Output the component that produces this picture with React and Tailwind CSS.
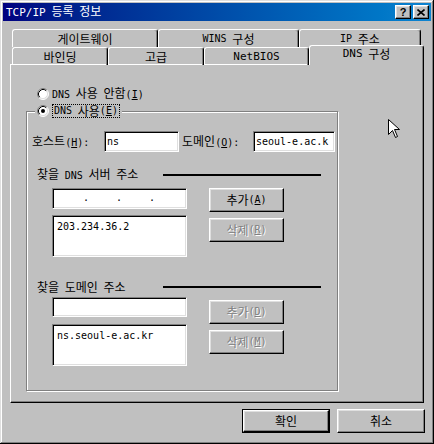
import React from "react";

function L({ children, className = "" }) {
  return (
    <span className={"font-['DejaVu_Sans_Mono',monospace] text-[10px] [word-spacing:0px] " + className}>
      {children}
    </span>
  );
}

function M({ c }) {
  return (
    <L>
      (<u className="underline underline-offset-[1px]">{c}</u>)
    </L>
  );
}

function Radio({ checked }) {
  return (
    <svg width="12" height="12" viewBox="0 0 12 12" className="shrink-0">
      <circle cx="6" cy="6" r="5" fill="#fff" />
      <path d="M2.11 9.89 A5.5 5.5 0 0 1 9.89 2.11" stroke="#808080" fill="none" strokeWidth="1" />
      <path d="M9.89 2.11 A5.5 5.5 0 0 1 2.11 9.89" stroke="#fff" fill="none" strokeWidth="1" />
      <path d="M2.82 9.18 A4.5 4.5 0 0 1 9.18 2.82" stroke="#000" fill="none" strokeWidth="1" />
      <path d="M9.18 2.82 A4.5 4.5 0 0 1 2.82 9.18" stroke="#dfdfdf" fill="none" strokeWidth="1" />
      {checked && <circle cx="6" cy="6" r="2" fill="#000" />}
    </svg>
  );
}

function Tab({ className = "", children }) {
  return (
    <div
      className={
        "h-[18px] flex items-center justify-center border-t border-l border-r border-t-white border-l-white border-r-black rounded-tl-[3px] rounded-tr-[3px] shadow-[inset_-1px_0_#808080] whitespace-pre " +
        className
      }
    >
      {children}
    </div>
  );
}

function Btn({ className = "", children, disabled, def }) {
  const inner = (
    <div
      className={
        "h-full w-full flex items-center justify-center border border-t-white border-l-white border-r-black border-b-black shadow-[inset_-1px_-1px_#808080,inset_1px_1px_#dfdfdf] whitespace-nowrap " +
        (disabled ? "text-[#808080] [text-shadow:1px_1px_0_#fff]" : "text-black")
      }
    >
      {children}
    </div>
  );
  if (def) {
    return <div className={"border border-black " + className}>{inner}</div>;
  }
  return <div className={className}>{inner}</div>;
}

function Field({ className = "", children }) {
  return (
    <div
      className={
        "bg-white border border-t-[#808080] border-l-[#808080] border-b-white border-r-white shadow-[inset_1px_1px_#000,inset_-1px_-1px_#dfdfdf] " +
        className
      }
    >
      {children}
    </div>
  );
}

function CapBtn({ children }) {
  return (
    <div className="w-[16px] h-[14px] bg-[#c0c0c0] flex items-center justify-center border border-t-white border-l-white border-r-black border-b-black shadow-[inset_-1px_-1px_#808080,inset_1px_1px_#dfdfdf]">
      {children}
    </div>
  );
}

export default function App() {
  return (
    <div className="relative w-[434px] h-[444px] bg-[#c0c0c0] p-[3px] flex flex-col font-['Noto_Sans_CJK_KR',sans-serif] text-[12px] leading-[14px] [word-spacing:3px] text-black shadow-[inset_-1px_-1px_#000,inset_1px_1px_#dfdfdf,inset_-2px_-2px_#808080,inset_2px_2px_#fff] overflow-hidden select-none">
      {/* Title bar */}
      <div className="h-[18px] flex items-center bg-linear-to-r from-[#000080] to-[#1084d0] pl-[3px] pr-[2px]">
        <span className="text-white whitespace-pre">
          <L className="text-[11px]">TCP/IP</L> 등록 정보
        </span>
        <div className="ml-auto flex gap-[2px]">
          <CapBtn>
            <span className="font-['Liberation_Sans',sans-serif] font-bold text-[11px] leading-none">?</span>
          </CapBtn>
          <CapBtn>
            <svg width="8" height="7" viewBox="0 0 8 7">
              <path d="M0.5 0.5 L7.5 6.5 M7.5 0.5 L0.5 6.5" stroke="#000" strokeWidth="1.6" />
            </svg>
          </CapBtn>
        </div>
      </div>

      {/* Body */}
      <div className="pl-[7px] pt-[8px]">
        <div className="flex ml-[2px]">
          <Tab className="w-[146px]">게이트웨이</Tab>
          <Tab className="w-[141px]">
            <L>WINS</L> 구성
          </Tab>
          <Tab className="w-[122px]">
            <L>IP</L> 주소
          </Tab>
        </div>
        <div className="flex ml-[2px] h-[17px] items-start">
          <Tab className="w-[96px] h-[17px]">바인딩</Tab>
          <Tab className="w-[96px] h-[17px]">고급</Tab>
          <Tab className="w-[105px] h-[17px]">
            <L className="text-[11px]">NetBIOS</L>
          </Tab>
          <Tab className="w-[115px] h-[20px] -mt-[2px] relative z-10 bg-[#c0c0c0] pb-[3px]">
            <L className="text-[11px]">DNS</L> 구성
          </Tab>
        </div>

        {/* Panel */}
        <div className="w-[414px] h-[339px] border border-t-white border-l-white border-r-black border-b-black shadow-[inset_-1px_-1px_#808080] flex flex-col">
          <div className="flex items-center ml-[26px] mt-[22px] h-[13px]">
            <Radio />
            <span className="ml-[3px] whitespace-pre">
              <L>DNS</L> 사용 안함<M c="I" />
            </span>
          </div>

          {/* Group box */}
          <div className="ml-[15px] mt-[11px] w-[312px] h-[280px] border border-[#808080] shadow-[1px_1px_#fff,inset_1px_1px_#fff] flex flex-col">
            <div className="-mt-[8px] ml-[8px] w-fit bg-[#c0c0c0] px-[2px] flex items-center h-[14px]">
              <Radio checked />
              <span className="ml-[3px] px-[1px] h-[14px] flex items-center border border-dotted border-black whitespace-pre">
                <L>DNS</L> 사용<M c="E" />
              </span>
            </div>

            {/* Host / domain row */}
            <div className="flex items-center mt-[13px] pl-[5px] h-[21px]">
              <span className="w-[72px] whitespace-nowrap">
                호스트<M c="H" />
                <L>:</L>
              </span>
              <Field className="w-[75px] h-[21px] pl-[2px] flex items-center">
                <L className="text-[10.5px]">ns</L>
              </Field>
              <span className="ml-[3px] w-[71px] whitespace-nowrap">
                도메인<M c="O" />
                <L>:</L>
              </span>
              <Field className="w-[82px] h-[21px] pl-[2px] flex items-center overflow-hidden">
                <L className="text-[10.5px] whitespace-nowrap">seoul-e.ac.k</L>
              </Field>
            </div>

            {/* Section 1 header */}
            <div className="flex items-center mt-[16px] pl-[10px] h-[14px]">
              <span className="w-[126px] whitespace-pre">
                찾을 <L>DNS</L> 서버 주소
              </span>
              <div className="w-[158px] h-[2px] bg-black" />
            </div>

            {/* Section 1 body */}
            <div className="flex mt-[6px] ml-[25px]">
              <div className="w-[135px] flex flex-col gap-[6px]">
                <Field className="h-[21px] flex items-end pb-[3px] pl-[2px]">
                  <div className="w-[28px]" />
                  <L>.</L>
                  <div className="w-[27px]" />
                  <L>.</L>
                  <div className="w-[27px]" />
                  <L>.</L>
                </Field>
                <Field className="h-[42px] pl-[4px] pt-[2px]">
                  <L className="text-[10.5px]">203.234.36.2</L>
                </Field>
              </div>
              <div className="ml-[22px] flex flex-col gap-[6px]">
                <Btn className="w-[75px] h-[24px]">
                  추가<M c="A" />
                </Btn>
                <Btn className="w-[75px] h-[24px]" disabled>
                  삭제<M c="R" />
                </Btn>
              </div>
            </div>

            {/* Section 2 header */}
            <div className="flex items-center mt-[23px] pl-[10px] h-[14px]">
              <span className="w-[126px] whitespace-pre">찾을 도메인 주소</span>
              <div className="w-[158px] h-[2px] bg-black" />
            </div>

            {/* Section 2 body */}
            <div className="flex mt-[3px] ml-[25px]">
              <div className="w-[135px] flex flex-col gap-[7px]">
                <Field className="h-[20px]" />
                <Field className="h-[42px] pl-[4px] pt-[2px]">
                  <L className="text-[10.5px]">ns.seoul-e.ac.kr</L>
                </Field>
              </div>
              <div className="ml-[22px] mt-[3px] flex flex-col gap-[6px]">
                <Btn className="w-[75px] h-[24px]" disabled>
                  추가<M c="D" />
                </Btn>
                <Btn className="w-[75px] h-[24px]" disabled>
                  삭제<M c="M" />
                </Btn>
              </div>
            </div>
          </div>
        </div>
      </div>

      {/* Bottom buttons */}
      <div className="flex justify-end gap-[7px] pr-[6px] mt-[6px]">
        <Btn className="w-[88px] h-[24px]" def>
          확인
        </Btn>
        <Btn className="w-[88px] h-[24px]">취소</Btn>
      </div>

      {/* Mouse cursor */}
      <svg
        className="absolute left-[388px] top-[119px]"
        width="12"
        height="20"
        viewBox="0 0 12 20"
      >
        <path
          d="M0.5 0.5 L0.5 15.5 L4.5 11.5 L7.5 18.5 L9.5 17.5 L6.5 10.5 L11.5 10.5 Z"
          fill="#fff"
          stroke="#000"
          strokeWidth="1"
        />
      </svg>
    </div>
  );
}
